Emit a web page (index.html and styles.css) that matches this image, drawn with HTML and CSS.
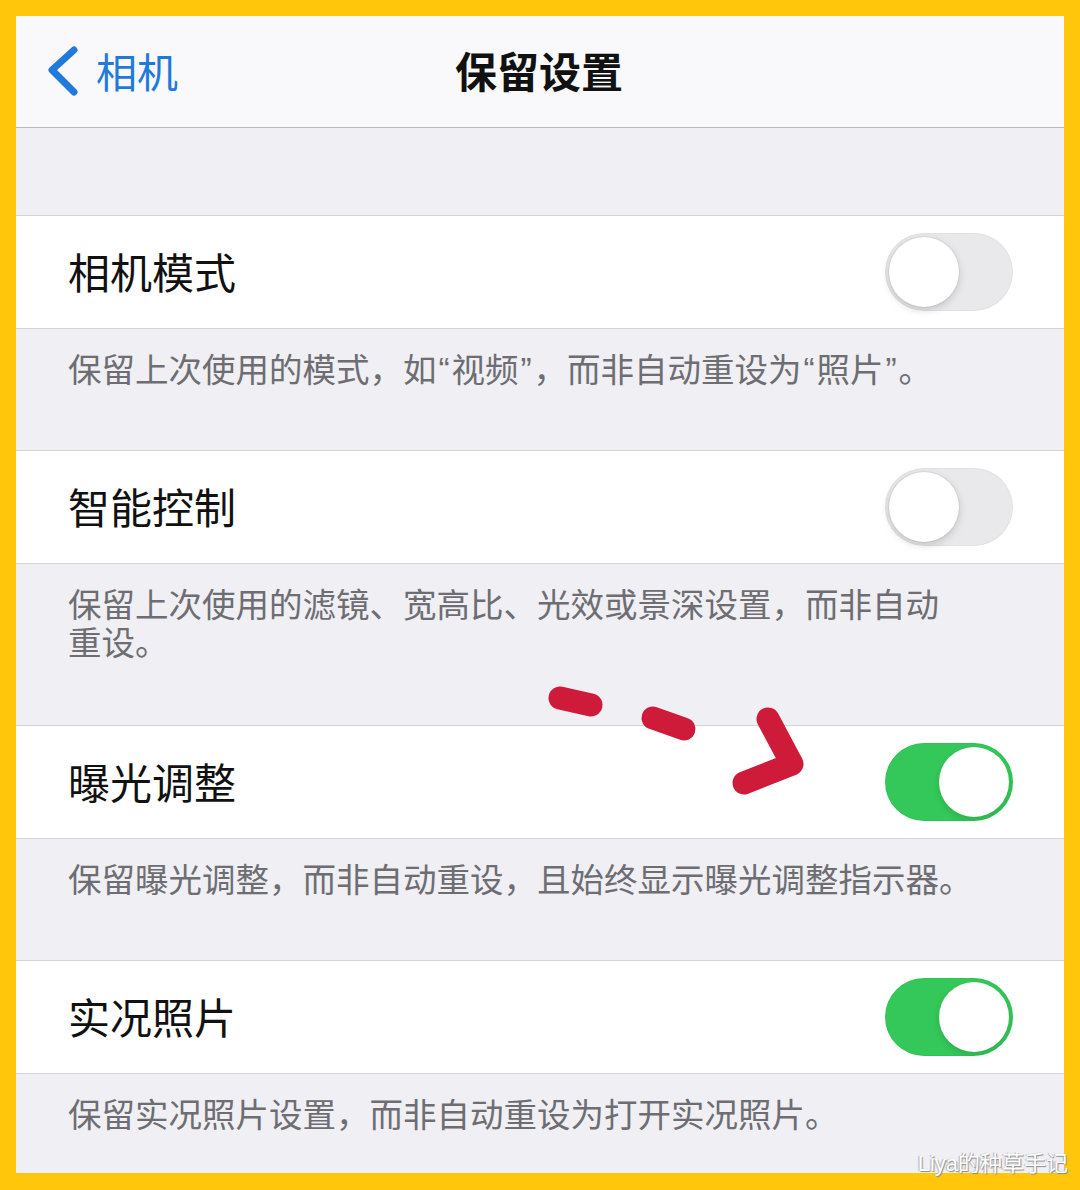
FILE: index.html
```html
<!DOCTYPE html>
<html lang="zh">
<head>
<meta charset="utf-8">
<link rel="stylesheet" href="styles.css">
</head>
<body>
<div class="frame">
  <div class="screen">
    <header class="nav">
      <div class="back">
        <svg class="chev" width="34" height="50" viewBox="0 0 34 50"><path d="M28 4 L6 24 L28 46" fill="none" stroke="#1f7adb" stroke-width="7" stroke-linecap="round" stroke-linejoin="round"/></svg>
        <span>相机</span>
      </div>
      <div class="title">保留设置</div>
    </header>
    <div class="spacer"></div>

    <div class="row"><span class="label">相机模式</span><span class="toggle"></span></div>
    <div class="foot">保留上次使用的模式，如<span class="q">“</span>视频<span class="q">”</span>，而非自动重设为<span class="q">“</span>照片<span class="q">”</span>。</div>

    <div class="row"><span class="label">智能控制</span><span class="toggle"></span></div>
    <div class="foot two">保留上次使用的滤镜、宽高比、光效或景深设置，而非自动<br>重设。</div>

    <div class="row"><span class="label">曝光调整</span><span class="toggle on"></span></div>
    <div class="foot">保留曝光调整，而非自动重设，且始终显示曝光调整指示器。</div>

    <div class="row"><span class="label">实况照片</span><span class="toggle on"></span></div>
    <div class="foot">保留实况照片设置，而非自动重设为打开实况照片。</div>
  </div>
</div>
<svg class="arrow" width="1080" height="1190" viewBox="0 0 1080 1190">
  <g fill="none" stroke="#cf1b3a" stroke-width="23" stroke-linecap="round" stroke-linejoin="round">
    <path d="M560 698 L591 705"/>
    <path d="M653 718 L684 729"/>
    <path d="M768 719 L792 764 L744 783"/>
  </g>
</svg>
<div class="mark">Liya的种草手记</div>
</body>
</html>
```

FILE: styles.css
```css
* { box-sizing: border-box; }
html, body { margin: 0; padding: 0; }
body {
  width: 1080px;
  height: 1190px;
  background: #ffc60b;
  font-family: "Noto Sans CJK SC", "Noto Sans", sans-serif;
  position: relative;
  overflow: hidden;
}
.frame {
  padding: 16px 16px 17px 16px;
}
.screen {
  width: 1048px;
  height: 1157px;
  background: #efeff4;
  overflow: hidden;
}
.nav {
  height: 112px;
  background: #f9f9fb;
  border-bottom: 1px solid #b9b9bd;
  display: flex;
  align-items: center;
  justify-content: center;
  position: relative;
}
.back {
  position: absolute;
  left: 30px;
  top: 0;
  height: 111px;
  display: flex;
  align-items: center;
  gap: 16px;
  color: #1f7adb;
  font-size: 41px;
  padding-bottom: 4px;
}
.chev { display: block; margin-top: 2px; }
.title {
  font-size: 42px;
  font-weight: 700;
  color: #111;
  padding-bottom: 4px;
  padding-right: 2px;
}
.spacer { height: 87px; }
.row {
  height: 114px;
  background: #fff;
  border-top: 1px solid #d4d4d8;
  border-bottom: 1px solid #d4d4d8;
  display: flex;
  align-items: center;
  justify-content: space-between;
  padding: 0 51px 0 52px;
}
.label {
  font-size: 42px;
  color: #111;
  padding-bottom: 4px;
}
.toggle {
  width: 128px;
  height: 78px;
  border-radius: 39px;
  background: #e9e9eb;
  position: relative;
  box-shadow: inset 0 0 0 1px rgba(0,0,0,0.03);
}
.toggle::after {
  content: "";
  position: absolute;
  left: 4px;
  top: 4px;
  width: 70px;
  height: 70px;
  border-radius: 50%;
  background: #fff;
  box-shadow: 0 3px 8px rgba(0,0,0,0.16), 0 0 0 1px rgba(0,0,0,0.05);
}
.toggle.on { background: #34c759; }
.toggle.on::after { left: 54px; box-shadow: 0 3px 6px rgba(0,0,0,0.12); }
.foot {
  font-size: 33.5px;
  line-height: 38px;
  height: 121px;
  color: #6d6d72;
  padding: 20px 20px 0 52px;
  white-space: nowrap;
  overflow: hidden;
}
.foot.two { height: 161px; }
.q {
  font-family: "Liberation Sans", sans-serif;
  display: inline-block;
  vertical-align: top;
  height: 38px;
  line-height: 42px;
  width: 15px;
  text-align: center;
}
.arrow {
  position: absolute;
  left: 0;
  top: 0;
  pointer-events: none;
}
.mark {
  position: absolute;
  right: 12px;
  bottom: 13px;
  font-family: "Liberation Sans", "Noto Sans CJK SC", sans-serif;
  font-size: 22px;
  color: #fff;
  text-shadow: 1px 1px 1px #8a8a8a, -1px 0 1px #b0b0b0;
  line-height: 26px;
}
```
